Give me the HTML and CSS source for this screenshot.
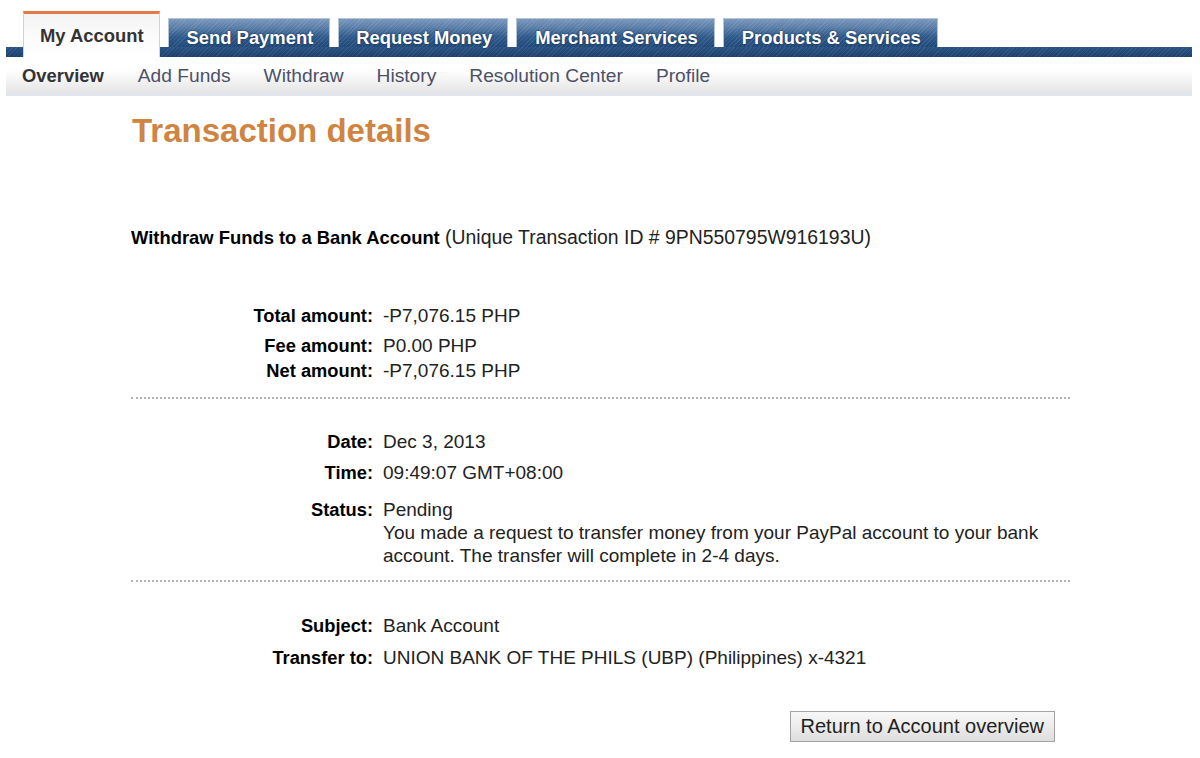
FILE: index.html
```html
<!DOCTYPE html>
<html lang="en">
<head>
<meta charset="utf-8">
<title>Transaction details</title>
<link rel="stylesheet" href="styles.css">
</head>
<body>
<div class="header">
  <ul class="tabs">
    <li class="tab tab-active">My Account</li>
    <li class="tab">Send Payment</li>
    <li class="tab tab-narrow">Request Money</li>
    <li class="tab">Merchant Services</li>
    <li class="tab">Products &amp; Services</li>
  </ul>
  <ul class="subnav">
    <li class="subnav-item subnav-current">Overview</li>
    <li class="subnav-item">Add Funds</li>
    <li class="subnav-item">Withdraw</li>
    <li class="subnav-item">History</li>
    <li class="subnav-item">Resolution Center</li>
    <li class="subnav-item">Profile</li>
  </ul>
</div>

<main class="main">
  <h1 class="title">Transaction details</h1>
  <p class="summary"><b>Withdraw Funds to a Bank Account</b> (Unique Transaction ID # 9PN550795W916193U)</p>

  <section class="group group-amounts">
    <div class="row"><span class="label">Total amount:</span><span class="value">-P7,076.15 PHP</span></div>
    <div class="row row-fee"><span class="label">Fee amount:</span><span class="value">P0.00 PHP</span></div>
    <div class="row row-net"><span class="label">Net amount:</span><span class="value">-P7,076.15 PHP</span></div>
  </section>

  <hr class="divider divider-first">

  <section class="group group-status">
    <div class="row"><span class="label">Date:</span><span class="value">Dec 3, 2013</span></div>
    <div class="row row-time"><span class="label">Time:</span><span class="value">09:49:07 GMT+08:00</span></div>
    <div class="row row-status"><span class="label">Status:</span><span class="value">Pending<br>You made a request to transfer money from your PayPal account to your bank account. The transfer will complete in 2-4 days.</span></div>
  </section>

  <hr class="divider divider-second">

  <section class="group group-bank">
    <div class="row"><span class="label">Subject:</span><span class="value">Bank Account</span></div>
    <div class="row row-transfer"><span class="label">Transfer to:</span><span class="value">UNION BANK OF THE PHILS (UBP) (Philippines) x-4321</span></div>
  </section>

  <div class="actions">
    <button class="btn" type="button">Return to Account overview</button>
  </div>
</main>
</body>
</html>
```

FILE: styles.css
```css
* { box-sizing: border-box; }

html, body {
  margin: 0;
  padding: 0;
  background: #ffffff;
}

body {
  font-family: "Liberation Sans", Arial, sans-serif;
  color: #000;
}

ul { list-style: none; margin: 0; padding: 0; }

/* ---------- header ---------- */
.header {
  margin: 11px 0 0 6px;
  width: 1186px;
}

.tabs {
  display: flex;
  align-items: flex-end;
  gap: 8px;
  height: 46px;
  padding-left: 17px;
  background:
    repeating-linear-gradient(-45deg, rgba(255,255,255,0.07) 0 1px, transparent 1px 3px) 0 36px / 100% 10px no-repeat,
    linear-gradient(to bottom, #2a5283 0, #1b3f6a 100%) 0 36px / 100% 10px no-repeat;
}

.tab {
  height: 29px;
  margin-bottom: 10px;
  padding: 8px 16px 0 18px;
  line-height: 21px;
  font-size: 18.4px;
  font-weight: bold;
  color: #fff;
  white-space: nowrap;
  text-shadow: 0 0 2px rgba(10, 30, 60, 0.9);
  border: 1px solid #b7c3d2;
  border-bottom: 0;
  background:
    repeating-linear-gradient(-45deg, rgba(255,255,255,0.09) 0 1px, transparent 1px 3px),
    linear-gradient(to bottom, #7896bb 0%, #5a7ea8 30%, #2f5a8b 62%, #1f4878 100%);
}

.tab-narrow {
  padding: 8px 15px 0 17px;
}

.tab-active {
  height: 46px;
  margin-bottom: 0;
  padding: 11px 15px 0 16px;
  color: #333;
  text-shadow: none;
  border: 1px solid #d2d2d2;
  border-top: 3px solid #e57a45;
  border-bottom: 0;
  background: linear-gradient(to bottom, #f3f3f3 0%, #fbfbfb 50%, #ffffff 100%);
}

.subnav {
  display: flex;
  gap: 33px;
  height: 39px;
  padding-left: 16px;
  background: linear-gradient(to bottom, #ffffff 0%, #ffffff 35%, #e3e3e3 100%);
  border-bottom: 2px solid #dfe6ef;
}

.subnav-item {
  font-size: 19.2px;
  line-height: 37px;
  color: #4d5068;
  white-space: nowrap;
}

.subnav-current {
  font-size: 18.4px;
  font-weight: bold;
  color: #333;
  margin-right: 1px;
}

/* ---------- main ---------- */
.main {
  margin-left: 131px;
  width: 939px;
  padding-bottom: 14px;
}

.title {
  margin: 16px 0 0 1px;
  font-size: 33px;
  line-height: 38px;
  font-weight: bold;
  color: #cf8441;
}

.summary {
  margin: 76px 0 0;
  font-size: 19.4px;
  line-height: 23px;
  color: #222;
}

.summary b {
  font-size: 18.4px;
  color: #000;
}

.group-amounts { margin-top: 55px; }

.row {
  display: grid;
  grid-template-columns: 242px 1fr;
  column-gap: 10px;
  align-items: baseline;
  line-height: 23px;
}

.label {
  text-align: right;
  font-weight: bold;
  font-size: 18.3px;
  color: #000;
}

.value {
  font-size: 19px;
  color: #222;
  padding-right: 30px;
}

.row-fee { margin-top: 7px; }
.row-net { margin-top: 2px; }
.row-time { margin-top: 8px; }
.row-status { margin-top: 14px; }
.row-transfer { margin-top: 9px; }

.divider {
  margin: 0;
  height: 0;
  border: 0;
  border-top: 2px dotted #b3b3b3;
}

.divider-first { margin-top: 15px; }
.group-status { margin-top: 31px; }
.divider-second { margin-top: 13px; }
.group-bank { margin-top: 32px; }

.actions {
  display: flex;
  justify-content: flex-end;
  padding-right: 15px;
  margin-top: 42px;
}

.btn {
  height: 31px;
  padding: 0 10px;
  font-family: "Liberation Sans", Arial, sans-serif;
  font-size: 20px;
  line-height: 29px;
  color: #222;
  background: linear-gradient(to bottom, #f7f7f7 0%, #ececec 50%, #dddddd 100%);
  border: 1px solid #a3a3a3;
  border-radius: 0;
}
```
